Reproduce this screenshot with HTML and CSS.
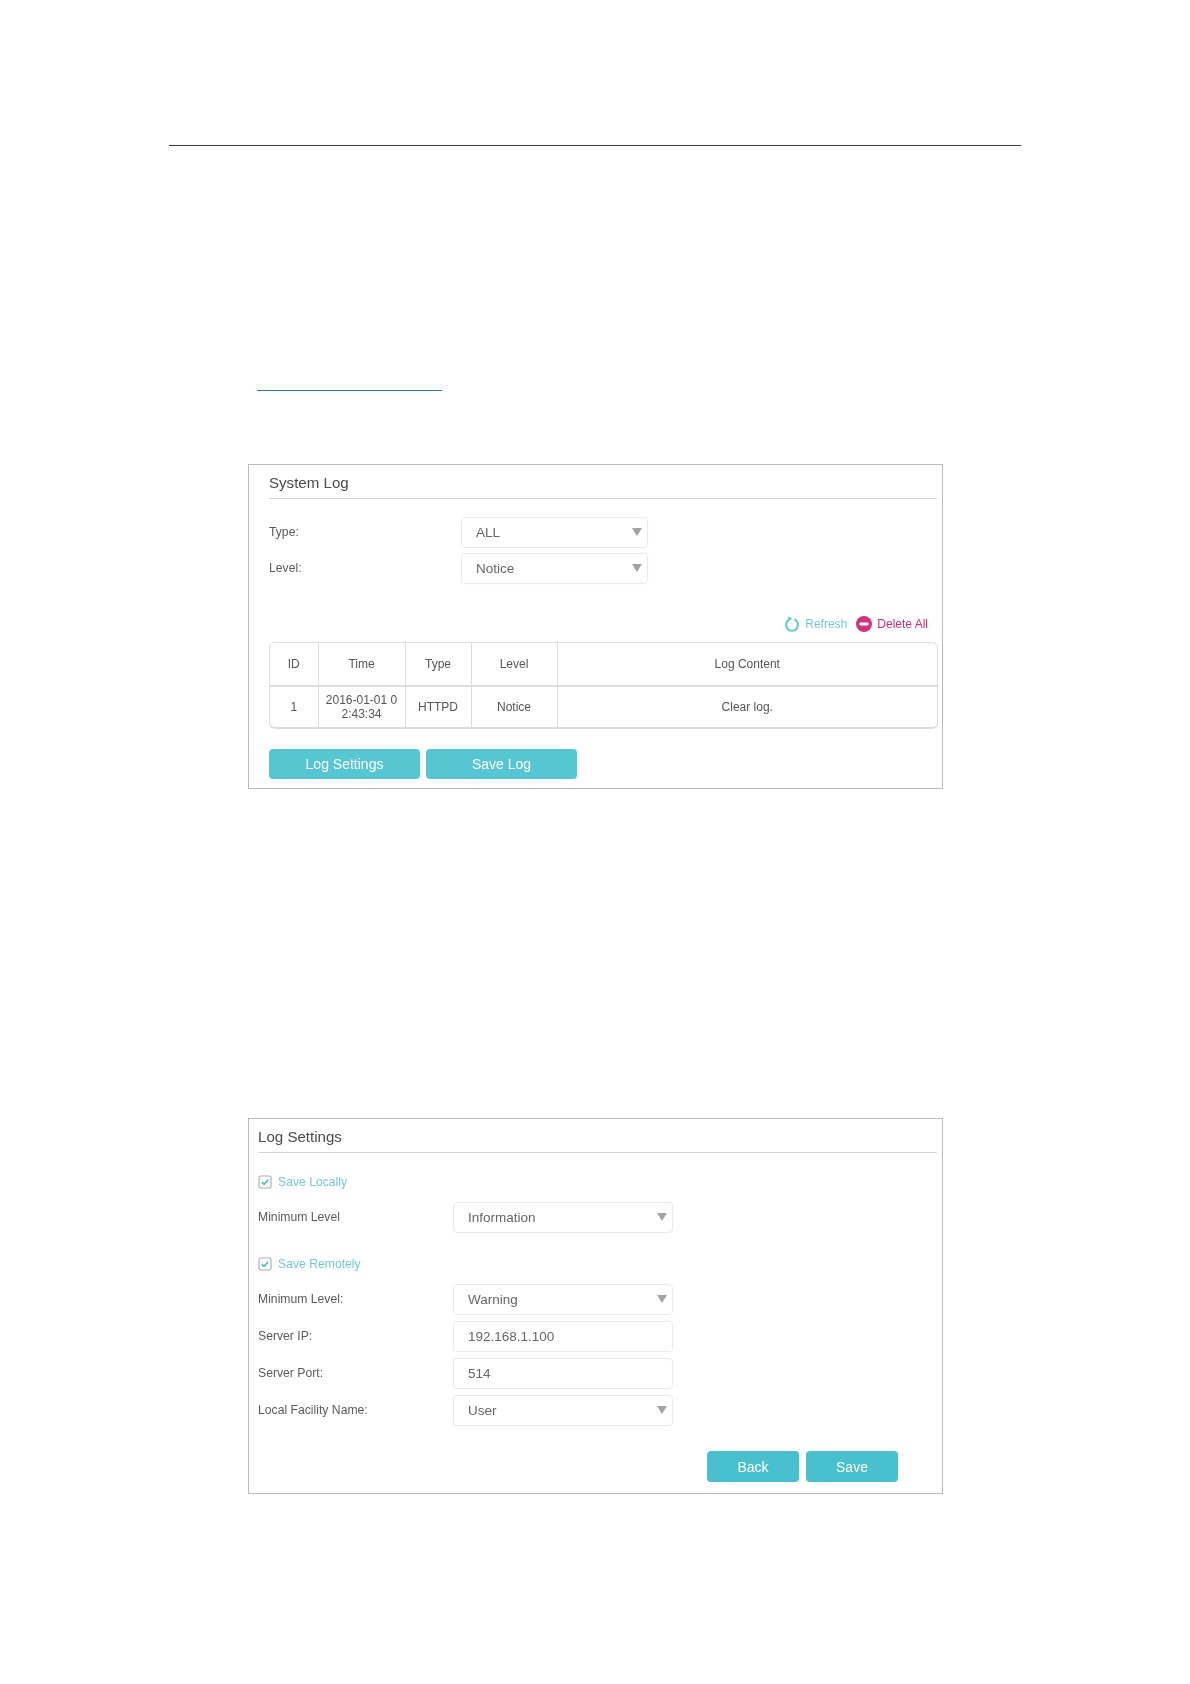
FILE: index.html
```html
<!DOCTYPE html>
<html lang="en">
<head>
<meta charset="utf-8">
<title>System Log</title>
<link rel="stylesheet" href="styles.css">
</head>
<body>
<main class="page">
  <hr class="top-rule">
  <div class="link-line"></div>

  <section class="panel panel-log">
    <h2 class="title">System Log</h2>
    <div class="row">
      <label class="label">Type:</label>
      <div class="field select"><span>ALL</span><i class="arrow"></i></div>
    </div>
    <div class="row">
      <label class="label">Level:</label>
      <div class="field select"><span>Notice</span><i class="arrow"></i></div>
    </div>
    <div class="tools">
      <svg class="tool-icon" viewBox="0 0 16 16" aria-hidden="true"><path d="M5.4 3.4A6 6 0 1 0 10.6 3.4" fill="none" stroke="#5fc3d0" stroke-width="2" stroke-linecap="butt"/><path d="M4 0.4 L8.2 2.2 L4.6 5.4 Z" fill="#5fc3d0"/></svg>
      <span class="tool refresh">Refresh</span>
      <svg class="tool-icon del-icon" viewBox="0 0 16 16" aria-hidden="true"><circle cx="8" cy="8" r="8" fill="#cf337f"/><rect x="3.4" y="6.6" width="9.2" height="2.8" rx="1.2" fill="#fff"/></svg>
      <span class="tool delete">Delete All</span>
    </div>
    <div class="table-wrap">
      <table class="log-table">
        <colgroup><col class="c-id"><col class="c-time"><col class="c-type"><col class="c-level"><col></colgroup>
        <thead>
          <tr><th>ID</th><th>Time</th><th>Type</th><th>Level</th><th>Log Content</th></tr>
        </thead>
        <tbody>
          <tr><td>1</td><td class="time">2016-01-01 02:43:34</td><td>HTTPD</td><td>Notice</td><td>Clear log.</td></tr>
        </tbody>
      </table>
    </div>
    <div class="actions">
      <button class="btn btn-wide">Log Settings</button>
      <button class="btn btn-wide">Save Log</button>
    </div>
  </section>

  <section class="panel panel-settings">
    <h2 class="title">Log Settings</h2>
    <div class="check first">
      <svg class="box" viewBox="0 0 14 14" aria-hidden="true"><rect x="1" y="1" width="12" height="12" rx="1.5" fill="#fff" stroke="#a9a9a9" stroke-width="1.1"/><path d="M3.8 7.2 L6 9.3 L10.2 4.9" fill="none" stroke="#4bbccb" stroke-width="1.6"/></svg>
      <span>Save Locally</span>
    </div>
    <div class="row row-s">
      <label class="label">Minimum Level</label>
      <div class="field select"><span>Information</span><i class="arrow"></i></div>
    </div>
    <div class="check second">
      <svg class="box" viewBox="0 0 14 14" aria-hidden="true"><rect x="1" y="1" width="12" height="12" rx="1.5" fill="#fff" stroke="#a9a9a9" stroke-width="1.1"/><path d="M3.8 7.2 L6 9.3 L10.2 4.9" fill="none" stroke="#4bbccb" stroke-width="1.6"/></svg>
      <span>Save Remotely</span>
    </div>
    <div class="row row-s">
      <label class="label">Minimum Level:</label>
      <div class="field select"><span>Warning</span><i class="arrow"></i></div>
    </div>
    <div class="row row-s">
      <label class="label">Server IP:</label>
      <div class="field"><span>192.168.1.100</span></div>
    </div>
    <div class="row row-s">
      <label class="label">Server Port:</label>
      <div class="field"><span>514</span></div>
    </div>
    <div class="row row-s">
      <label class="label">Local Facility Name:</label>
      <div class="field select"><span>User</span><i class="arrow"></i></div>
    </div>
    <div class="actions actions-end">
      <button class="btn btn-short">Back</button>
      <button class="btn btn-short">Save</button>
    </div>
  </section>
</main>
</body>
</html>
```

FILE: styles.css
```css
* { box-sizing: border-box; }

html, body { margin: 0; padding: 0; background: #fff; }

body {
  font-family: "Liberation Sans", Arial, sans-serif;
  color: #555;
}

.page {
  width: 1190px;
  height: 1684px;
  padding-top: 145px;
  overflow: hidden;
}

.top-rule {
  width: 852px;
  height: 1px;
  margin: 0 0 0 169px;
  border: 0;
  background: #3a3a3a;
}

.link-line {
  width: 185px;
  height: 1px;
  margin: 244px 0 0 257px;
  background: #2a7aa0;
}

.panel {
  position: relative;
  width: 695px;
  margin-left: 248px;
  border: 1px solid #b9b9b9;
  background: #fff;
}

.panel-log { height: 325px; margin-top: 73px; padding: 0 5px 0 20px; }
.panel-settings { height: 376px; margin-top: 329px; padding: 0 5px 0 9px; }

.panel > * { filter: blur(.3px); }

.title {
  height: 34px;
  margin: 0;
  padding-top: 8px;
  border-bottom: 1px solid #d2d2d2;
  font-size: 15.1px;
  line-height: 19px;
  font-weight: 400;
  color: #4a4a4a;
}

.row { display: flex; align-items: center; height: 30px; margin-bottom: 6px; }
.panel-log .title + .row { margin-top: 18px; }

.label { width: 192px; font-size: 12.2px; color: #5a5a5a; flex: none; }
.row-s .label { width: 195px; }

.field {
  position: relative;
  display: flex;
  align-items: center;
  width: 187px;
  height: 31px;
  padding-left: 14px;
  border: 1px solid #e9e9e9;
  border-radius: 4px;
  font-size: 13.5px;
  color: #666;
  box-shadow: 0 0 2px rgba(0, 0, 0, .04);
}

.row-s .field { width: 220px; }

.arrow {
  position: absolute;
  right: 5px;
  top: 10px;
  border-style: solid;
  border-width: 8px 5.5px 0;
  border-color: #a3a3a3 transparent transparent;
}

.tools {
  display: flex;
  align-items: center;
  justify-content: flex-end;
  height: 18px;
  margin-top: 32px;
  padding-right: 9px;
  font-size: 12px;
}

.tool-icon { width: 16px; height: 16px; margin-right: 5px; }
.del-icon { margin-left: 9px; }
.refresh { color: #73c8d4; }
.delete { color: #c92f70; }

.table-wrap {
  width: 669px;
  margin-top: 9px;
  border: 1px solid #dcdcdc;
  border-bottom-width: 2px;
  border-radius: 6px;
  overflow: hidden;
}

.log-table {
  width: 100%;
  border-collapse: collapse;
  table-layout: fixed;
  font-size: 12px;
  color: #555;
  text-align: center;
}

.c-id { width: 48px; }
.c-time { width: 87px; }
.c-type { width: 66px; }
.c-level { width: 86px; }

.log-table th, .log-table td {
  padding: 0 6px;
  border-left: 1px solid #dcdcdc;
  font-weight: 400;
  line-height: 14px;
}

.log-table th:first-child, .log-table td:first-child { border-left: 0; }
.log-table th { height: 43px; border-bottom: 2px solid #dcdcdc; }
.log-table td { height: 41px; }
.time { word-break: break-all; }

.actions { display: flex; gap: 6px; margin-top: 20px; }
.actions-end { position: absolute; left: 458px; bottom: 11px; margin: 0; gap: 7px; }

.btn {
  height: 30px;
  padding: 0;
  border: 0;
  border-radius: 4px;
  background: #57c6d3;
  color: #fff;
  font-family: inherit;
  font-size: 14px;
}

.btn-wide { width: 151px; }
.btn-short { width: 92px; height: 31px; background: #48c0ce; }

.check {
  display: flex;
  align-items: center;
  height: 16px;
  font-size: 12.2px;
  color: #73c8d4;
}

.check.first { margin-top: 21px; }
.check.second { margin-top: 23px; }
.box { width: 14px; height: 14px; margin-right: 6px; flex: none; }

.panel-settings .row { height: 32px; margin-bottom: 5px; }
.check.first + .row { margin-top: 11px; }
.check.second + .row { margin-top: 11px; }
```
